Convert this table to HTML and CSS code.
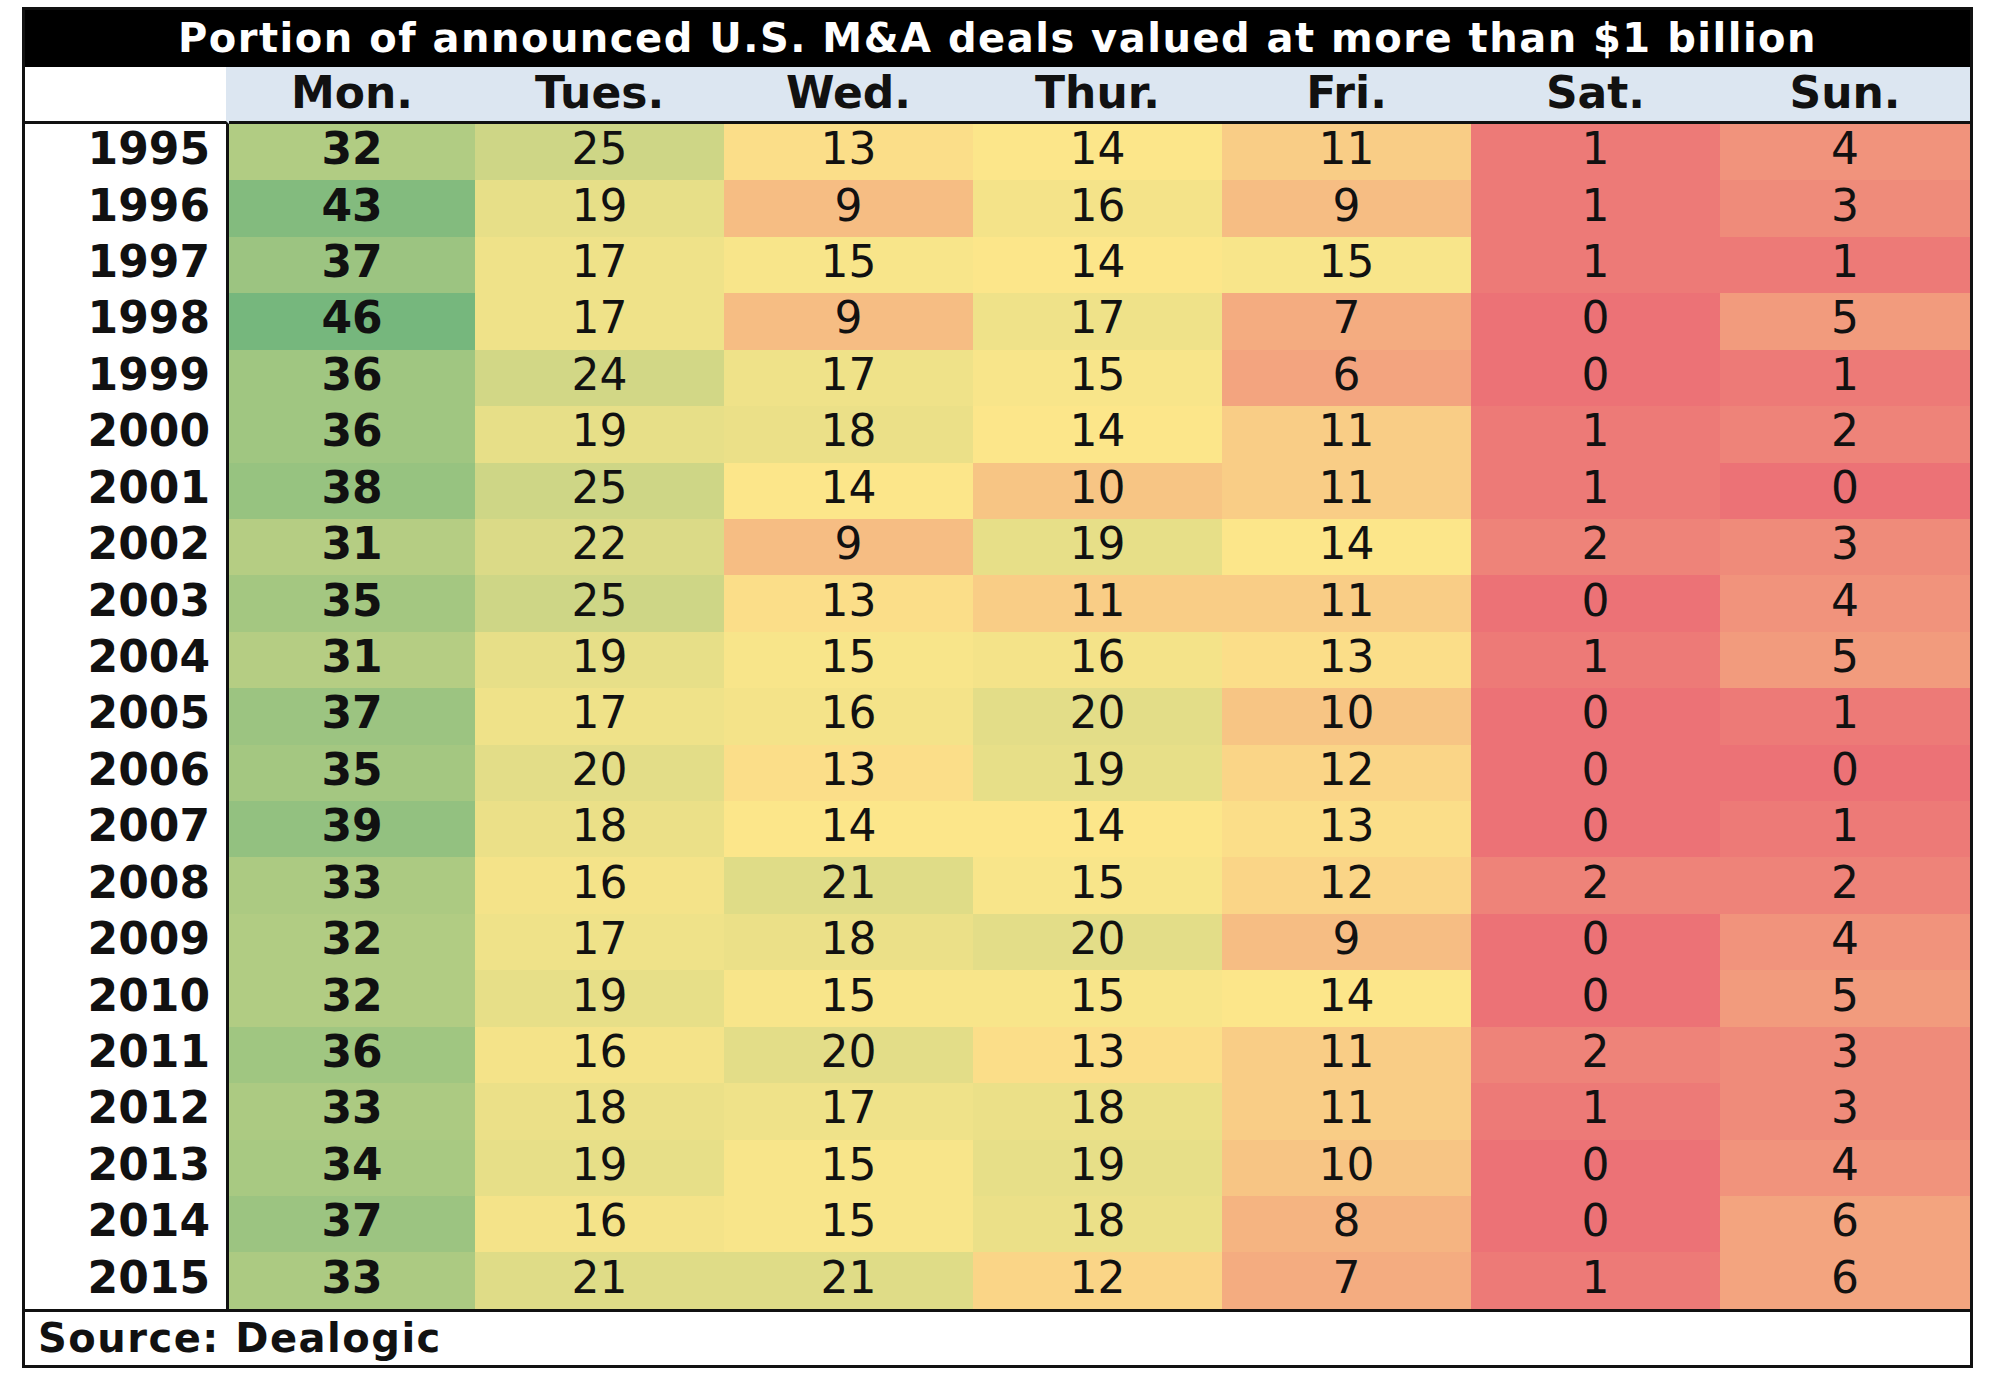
FILE: index.html
```html
<!DOCTYPE html>
<html lang="en">
<head>
<meta charset="utf-8">
<title>Portion of announced U.S. M&amp;A deals valued at more than $1 billion</title>
<link rel="stylesheet" href="styles.css">
</head>
<body>
<div class="sheet">
  <div class="title">Portion of announced U.S. M&amp;A deals valued at more than $1 billion</div>
  <table class="grid">
    <colgroup>
      <col class="c-year"><col class="c-mon"><col class="c-day"><col class="c-day"><col class="c-day"><col class="c-day"><col class="c-day"><col class="c-last">
    </colgroup>
    <thead>
      <tr><th class="corner"></th><th>Mon.</th><th>Tues.</th><th>Wed.</th><th>Thur.</th><th>Fri.</th><th>Sat.</th><th>Sun.</th></tr>
    </thead>
    <tbody>
      <tr><th class="year">1995</th><td class="mon v32">32</td><td class="v25">25</td><td class="v13">13</td><td class="v14">14</td><td class="v11">11</td><td class="v1">1</td><td class="v4">4</td></tr>
      <tr><th class="year">1996</th><td class="mon v43">43</td><td class="v19">19</td><td class="v9">9</td><td class="v16">16</td><td class="v9">9</td><td class="v1">1</td><td class="v3">3</td></tr>
      <tr><th class="year">1997</th><td class="mon v37">37</td><td class="v17">17</td><td class="v15">15</td><td class="v14">14</td><td class="v15">15</td><td class="v1">1</td><td class="v1">1</td></tr>
      <tr><th class="year">1998</th><td class="mon v46">46</td><td class="v17">17</td><td class="v9">9</td><td class="v17">17</td><td class="v7">7</td><td class="v0">0</td><td class="v5">5</td></tr>
      <tr><th class="year">1999</th><td class="mon v36">36</td><td class="v24">24</td><td class="v17">17</td><td class="v15">15</td><td class="v6">6</td><td class="v0">0</td><td class="v1">1</td></tr>
      <tr><th class="year">2000</th><td class="mon v36">36</td><td class="v19">19</td><td class="v18">18</td><td class="v14">14</td><td class="v11">11</td><td class="v1">1</td><td class="v2">2</td></tr>
      <tr><th class="year">2001</th><td class="mon v38">38</td><td class="v25">25</td><td class="v14">14</td><td class="v10">10</td><td class="v11">11</td><td class="v1">1</td><td class="v0">0</td></tr>
      <tr><th class="year">2002</th><td class="mon v31">31</td><td class="v22">22</td><td class="v9">9</td><td class="v19">19</td><td class="v14">14</td><td class="v2">2</td><td class="v3">3</td></tr>
      <tr><th class="year">2003</th><td class="mon v35">35</td><td class="v25">25</td><td class="v13">13</td><td class="v11">11</td><td class="v11">11</td><td class="v0">0</td><td class="v4">4</td></tr>
      <tr><th class="year">2004</th><td class="mon v31">31</td><td class="v19">19</td><td class="v15">15</td><td class="v16">16</td><td class="v13">13</td><td class="v1">1</td><td class="v5">5</td></tr>
      <tr><th class="year">2005</th><td class="mon v37">37</td><td class="v17">17</td><td class="v16">16</td><td class="v20">20</td><td class="v10">10</td><td class="v0">0</td><td class="v1">1</td></tr>
      <tr><th class="year">2006</th><td class="mon v35">35</td><td class="v20">20</td><td class="v13">13</td><td class="v19">19</td><td class="v12">12</td><td class="v0">0</td><td class="v0">0</td></tr>
      <tr><th class="year">2007</th><td class="mon v39">39</td><td class="v18">18</td><td class="v14">14</td><td class="v14">14</td><td class="v13">13</td><td class="v0">0</td><td class="v1">1</td></tr>
      <tr><th class="year">2008</th><td class="mon v33">33</td><td class="v16">16</td><td class="v21">21</td><td class="v15">15</td><td class="v12">12</td><td class="v2">2</td><td class="v2">2</td></tr>
      <tr><th class="year">2009</th><td class="mon v32">32</td><td class="v17">17</td><td class="v18">18</td><td class="v20">20</td><td class="v9">9</td><td class="v0">0</td><td class="v4">4</td></tr>
      <tr><th class="year">2010</th><td class="mon v32">32</td><td class="v19">19</td><td class="v15">15</td><td class="v15">15</td><td class="v14">14</td><td class="v0">0</td><td class="v5">5</td></tr>
      <tr><th class="year">2011</th><td class="mon v36">36</td><td class="v16">16</td><td class="v20">20</td><td class="v13">13</td><td class="v11">11</td><td class="v2">2</td><td class="v3">3</td></tr>
      <tr><th class="year">2012</th><td class="mon v33">33</td><td class="v18">18</td><td class="v17">17</td><td class="v18">18</td><td class="v11">11</td><td class="v1">1</td><td class="v3">3</td></tr>
      <tr><th class="year">2013</th><td class="mon v34">34</td><td class="v19">19</td><td class="v15">15</td><td class="v19">19</td><td class="v10">10</td><td class="v0">0</td><td class="v4">4</td></tr>
      <tr><th class="year">2014</th><td class="mon v37">37</td><td class="v16">16</td><td class="v15">15</td><td class="v18">18</td><td class="v8">8</td><td class="v0">0</td><td class="v6">6</td></tr>
      <tr><th class="year">2015</th><td class="mon v33">33</td><td class="v21">21</td><td class="v21">21</td><td class="v12">12</td><td class="v7">7</td><td class="v1">1</td><td class="v6">6</td></tr>
    </tbody>
  </table>
  <div class="source">Source: Dealogic</div>
</div>
</body>
</html>
```

FILE: styles.css
```css
html, body {
  margin: 0;
  padding: 0;
  background: #ffffff;
}

body {
  font-family: "DejaVu Sans", Verdana, sans-serif;
  color: #111111;
}

.sheet {
  margin: 7px 0 0 22px;
  width: 1951px;
  box-sizing: border-box;
  border: 3px solid #111111;
  background: #ffffff;
}

.title {
  height: 57px;
  background: #000000;
  color: #ffffff;
  font-weight: bold;
  font-size: 40px;
  letter-spacing: 1.5px;
  line-height: 1;
  display: flex;
  align-items: center;
  justify-content: center;
  padding-bottom: 2px;
  box-sizing: border-box;
}

.grid {
  width: 1945px;
  table-layout: fixed;
  border-collapse: separate;
  border-spacing: 0;
  font-size: 44px;
  line-height: 1;
}

.c-year { width: 204px; }
.c-mon { width: 246px; }
.c-day { width: 249px; }
.c-last { width: 250px; }

.grid th,
.grid td {
  box-sizing: border-box;
  padding: 0;
  text-align: center;
  vertical-align: middle;
}

.grid thead tr { height: 57px; }

.grid thead th {
  background: #dce6f1;
  font-weight: bold;
  border-bottom: 3px solid #111111;
  padding-bottom: 2px;
}

.grid thead th.corner {
  background: #ffffff;
  border-right: 3px solid #dce6f1;
}

.grid tbody tr { height: 56.43px; }

.grid tbody td {
  font-weight: normal;
  padding-bottom: 6px;
}

.grid tbody td.mon { font-weight: bold; }

.grid th.year {
  text-align: right;
  font-weight: bold;
  padding: 0 16px 6px 0;
  border-right: 3px solid #111111;
  background: #ffffff;
}

.source {
  border-top: 3px solid #111111;
  height: 56px;
  box-sizing: border-box;
  padding: 0 0 0 13px;
  display: flex;
  align-items: center;
  font-weight: bold;
  font-size: 40px;
  letter-spacing: 1.5px;
  line-height: 1;
}

.v0 { background: rgb(236,114,118); }
.v1 { background: rgb(237,122,119); }
.v2 { background: rgb(238,131,121); }
.v3 { background: rgb(239,139,122); }
.v4 { background: rgb(241,147,124); }
.v5 { background: rgb(242,155,125); }
.v6 { background: rgb(243,164,127); }
.v7 { background: rgb(244,172,128); }
.v8 { background: rgb(245,180,129); }
.v9 { background: rgb(246,189,131); }
.v10 { background: rgb(247,197,132); }
.v11 { background: rgb(249,205,134); }
.v12 { background: rgb(250,213,135); }
.v13 { background: rgb(251,222,137); }
.v14 { background: rgb(252,230,138); }
.v15 { background: rgb(248,229,138); }
.v16 { background: rgb(244,227,137); }
.v17 { background: rgb(239,226,137); }
.v18 { background: rgb(235,224,136); }
.v19 { background: rgb(231,223,136); }
.v20 { background: rgb(227,221,136); }
.v21 { background: rgb(223,220,135); }
.v22 { background: rgb(219,218,135); }
.v24 { background: rgb(210,215,134); }
.v25 { background: rgb(206,214,134); }
.v31 { background: rgb(181,205,131); }
.v32 { background: rgb(177,204,131); }
.v33 { background: rgb(172,202,130); }
.v34 { background: rgb(168,201,130); }
.v35 { background: rgb(164,199,129); }
.v36 { background: rgb(160,198,129); }
.v37 { background: rgb(156,196,129); }
.v38 { background: rgb(151,195,128); }
.v39 { background: rgb(147,193,128); }
.v43 { background: rgb(131,187,126); }
.v46 { background: rgb(118,183,125); }
```
